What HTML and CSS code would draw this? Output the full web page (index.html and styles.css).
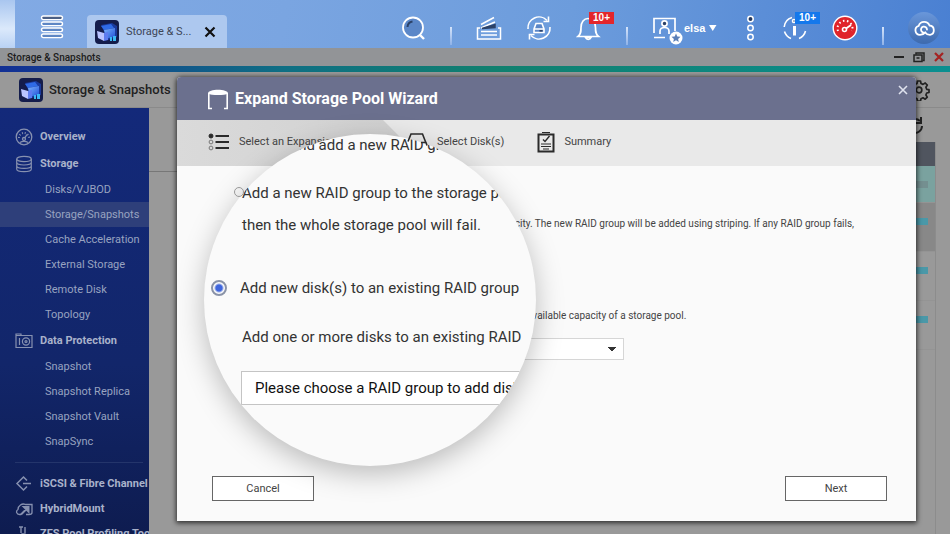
FILE: index.html
```html
<!DOCTYPE html>
<html lang="en">
<head>
<meta charset="utf-8">
<title>Storage &amp; Snapshots</title>
<link rel="stylesheet" href="styles.css">
</head>
<body>
<svg class="defs" aria-hidden="true">
  <defs>
    <linearGradient id="cube" x1="0" y1="0" x2="1" y2="1"><stop offset="0" stop-color="#7db4ff"/><stop offset="1" stop-color="#1d4fd6"/></linearGradient>
    <symbol id="app" viewBox="0 0 26 26">
      <rect x="1" y="1" width="24" height="24" rx="4" fill="#141d4c"/>
      <path d="M7 6l11-2 5 3v11l-9 3z" fill="#1a3a9c"/>
      <path d="M7 7l10-2 3 4-10 2z" fill="#2f6be6"/>
      <path d="M10 11l11-2v8l-9 3z" fill="url(#cube)"/>
      <path d="M3 12l7 2v8l-6-3z" fill="#b9c4ff"/>
      <path d="M10 14l4-1v8l-4 1z" fill="#5d7cf0"/>
      <path d="M16 18h2v4h-2zM19 17h3v5h-3z" fill="#3bb8f5"/>
    </symbol>
  </defs>
</svg>

<header class="topbar">
  <button class="menu" aria-label="Main menu">
    <svg width="24" height="26" viewBox="0 0 24 26" fill="#5d86c4" stroke="#fff" stroke-width="1.4"><rect x="1.5" y="2" width="21" height="3.6" rx="1.8" fill="#4a5f85"/><rect x="1.5" y="8" width="21" height="3.6" rx="1.8"/><rect x="1.5" y="14" width="21" height="3.6" rx="1.8"/><rect x="1.5" y="20" width="21" height="3.6" rx="1.8"/></svg>
  </button>
  <div class="tab">
    <svg width="26" height="26"><use href="#app"/></svg>
    <span>Storage &amp; S...</span>
    <button aria-label="Close tab"><svg width="12" height="12" viewBox="0 0 12 12" stroke="#111" stroke-width="2.2"><path d="M1.5 1.5l9 9M10.5 1.5l-9 9"/></svg></button>
  </div>
  <nav class="tools">
    <button aria-label="Search"><svg width="26" height="26" viewBox="0 0 26 26" fill="none" stroke="#fff" stroke-width="1.8"><circle cx="13" cy="12.5" r="10" fill="#5b87c8"/><path d="M19.500 19.500l4.500 4.500" stroke-width="2.4"/><path d="M7.500 12a6 6 0 0 1 5-5.500" stroke="#2c4268" stroke-width="2"/></svg></button>
    <i class="sep"></i>
    <button aria-label="Background tasks"><svg width="26" height="26" viewBox="0 0 26 26" fill="none" stroke="#fff" stroke-width="1.5"><path d="M4 13H1.500v11h23V13H22M5 16.500h16M5 20h16"/><path d="M5 9.500L18 2.500M5 13l14-6"/><path d="M6 13.500L19 9.500v3z" fill="#2c4268" stroke="#2c4268"/></svg></button>
    <button aria-label="External device"><svg width="26" height="26" viewBox="0 0 26 26" fill="none" stroke="#fff" stroke-width="1.6"><path d="M2 14A11 11 0 0 1 21 5.500M24 12A11 11 0 0 1 5 20.500"/><path d="M22.500 1.500v5h-5M3.500 24.500v-5h5"/><path d="M8 14l2-5.500h6l2 5.500v3.500H8zM8 14h10" fill="#5b87c8"/><path d="M13.500 15.800h3" stroke="#2c4268"/></svg></button>
    <button class="badged" aria-label="Notifications"><svg width="26" height="26" viewBox="0 0 26 26" fill="none" stroke="#fff" stroke-width="1.7"><path d="M2 21.500c3-2.500 3-5 3-9C5 7 8 3.500 12 3.500s7.500 3.500 7.500 9c0 4 0 6.500 3 9z"/><path d="M9.500 22.500a3 3 0 0 0 5.500 0z" fill="#2c4268"/></svg><b class="badge red">10+</b></button>
    <i class="sep"></i>
    <button class="user">
      <svg width="32" height="30" viewBox="0 0 32 30" fill="none" stroke="#fff" stroke-width="1.7"><path d="M2 18V3.500h21V16M2 22.500h11"/><circle cx="12.5" cy="8.5" r="2.6" fill="#2c4268"/><path d="M8 19v-3c0-2 2-3.500 4.500-3.500S17 14 17 16v3"/><circle cx="24" cy="23" r="6.5" fill="#fff" stroke="none"/><path d="M24 18.500l1.300 3 3.200.3-2.400 2.100.7 3.100-2.800-1.700-2.800 1.700.7-3.100-2.400-2.100 3.200-.3z" fill="#5a7fb8" stroke="none"/></svg>
      <span>elsa</span>
      <svg width="8" height="8" viewBox="0 0 8 8" fill="#fff"><path d="M0 1h7.500L3.750 7z"/></svg>
    </button>
    <button aria-label="More"><svg width="14" height="26" viewBox="0 0 14 26" fill="none" stroke="#fff" stroke-width="1.5"><circle cx="6.5" cy="4" r="2.7" fill="#24385e"/><circle cx="6.5" cy="13" r="2.7"/><circle cx="6.5" cy="22" r="2.7"/></svg></button>
    <button class="badged" aria-label="Information"><svg width="26" height="26" viewBox="0 0 26 26" fill="none" stroke="#fff" stroke-width="1.6"><path d="M10 2.500A11 11 0 0 0 2.200 12M2.500 16.500A11 11 0 0 0 9 23.500M17 23.500A11 11 0 0 0 23.500 16"/><path d="M12.500 11v9.500" stroke-width="3"/><circle cx="12" cy="6" r="1.5" fill="#2c4268"/></svg><b class="badge blue">10+</b></button>
    <button aria-label="Dashboard"><svg width="26" height="26" viewBox="0 0 26 26" fill="none" stroke="#fff"><circle cx="13" cy="13" r="11.8" fill="#e0242a" stroke-width="1.4"/><path d="M6 16a7.500 7.500 0 1 1 14 0" stroke-width="2" stroke-dasharray="1.5 2.6"/><circle cx="12.5" cy="14.5" r="2" stroke-width="1.6"/><path d="M14 13.500l5-3.500" stroke-width="2"/></svg></button>
    <i class="sep"></i>
    <button class="cloud" aria-label="Cloud"><svg width="22" height="18" viewBox="0 0 22 18" fill="none" stroke="#fff" stroke-width="1.8" stroke-linecap="round"><path d="M14 10.500a3 3 0 1 0-1 2.300c-1.800 2-3.500 3-6 3a4.600 4.600 0 0 1-1.300-9A5.800 5.800 0 0 1 16.500 6.500a4.700 4.700 0 0 1 .5 9.300c-2.500 0-3.800-.8-5-2.300"/></svg></button>
  </nav>
</header>

<main class="window">
  <div class="titlebar">
    <span>Storage &amp; Snapshots</span>
    <div class="winbtns">
      <button aria-label="Minimize"><svg width="12" height="12" viewBox="0 0 12 12" stroke="#222" stroke-width="2"><path d="M1 6h10"/></svg></button>
      <button aria-label="Restore"><svg width="12" height="12" viewBox="0 0 12 12" fill="none" stroke="#222" stroke-width="1.5"><path d="M3 3.500V2h8v7.500H9.500"/><path d="M1 4h8v6.500H1zM3.500 7h3"/></svg></button>
      <button aria-label="Close window"><svg width="12" height="12" viewBox="0 0 12 12" stroke="#a52222" stroke-width="2.2"><path d="M2 2l8 8M10 2l-8 8"/></svg></button>
    </div>
  </div>
  <div class="stripe"></div>
  <div class="apphead">
    <svg width="26" height="26"><use href="#app"/></svg>
    <h1>Storage &amp; Snapshots</h1>
    <button class="gear" aria-label="Settings"><svg width="22" height="22" viewBox="0 0 22 22" fill="none" stroke="#222" stroke-width="1.7" stroke-linejoin="round"><circle cx="11" cy="11" r="2.8"/><path d="M9.500 2h3l.5 2.500 2 .9 2.200-1.400 2.100 2.100-1.400 2.200.8 2 2.300.4v2.800l-2.300.5-.8 2 1.400 2.100-2.100 2.100-2.200-1.400-2 .9-.5 2.300h-3L9 19.700l-2-.9-2.200 1.400-2.100-2.100L4.100 16l-.8-2L1 13.500v-2.800l2.300-.4.800-2-1.400-2.200L4.800 4 7 5.400l2-.9z"/></svg></button>
  </div>
  <div class="work">
    <nav class="side">
      <a class="sec" href="#"><svg width="18" height="18" viewBox="0 0 18 18" fill="none" stroke="currentColor" stroke-width="1.3"><circle cx="9" cy="9" r="7.8"/><path d="M4 10a5 5 0 0 1 10 0" stroke-dasharray="1 1.8" stroke-width="2"/><circle cx="9" cy="11" r="1.5"/><path d="M9.800 9.800L12 6.500M5 14.500c2-1.500 6-1.500 8 0"/></svg>Overview</a>
      <a class="sec" href="#"><svg width="18" height="18" viewBox="0 0 18 18" fill="none" stroke="currentColor" stroke-width="1.2"><ellipse cx="9" cy="4" rx="7.3" ry="2.7"/><path d="M1.700 4v10c0 1.500 3.300 2.700 7.300 2.700s7.300-1.200 7.300-2.700V4M1.700 7.300C1.700 8.800 5 10 9 10s7.300-1.200 7.300-2.700M1.700 10.700c0 1.500 3.300 2.700 7.300 2.700s7.300-1.200 7.300-2.700"/></svg>Storage</a>
      <ul>
        <li><a href="#">Disks/VJBOD</a></li>
        <li class="on"><a href="#">Storage/Snapshots</a></li>
        <li><a href="#">Cache Acceleration</a></li>
        <li><a href="#">External Storage</a></li>
        <li><a href="#">Remote Disk</a></li>
        <li><a href="#">Topology</a></li>
      </ul>
      <a class="sec" href="#"><svg width="18" height="18" viewBox="0 0 18 18" fill="none" stroke="currentColor" stroke-width="1.2"><path d="M1 3.500h16v12H1zM1 3.500V2h5v1.500M4.500 6v7"/><circle cx="11" cy="9.5" r="3.6"/><circle cx="11" cy="9.5" r="1"/></svg>Data Protection</a>
      <ul>
        <li><a href="#">Snapshot</a></li>
        <li><a href="#">Snapshot Replica</a></li>
        <li><a href="#">Snapshot Vault</a></li>
        <li><a href="#">SnapSync</a></li>
      </ul>
      <hr>
      <a class="sec low" href="#"><svg width="18" height="18" viewBox="0 0 18 18" fill="none" stroke="currentColor" stroke-width="1.5"><path d="M12 5.500L8.500 2 2 8.500 8.500 15 12 11.500M8 8.500h8"/></svg>iSCSI &amp; Fibre Channel</a>
      <a class="sec low" href="#"><svg width="18" height="18" viewBox="0 0 18 18" fill="none" stroke="currentColor" stroke-width="1.3"><path d="M6 14.500H4.500c-3 0-4-3.500-1.500-5 0-4 4-6.500 7.500-5h6.500v8c0 1.500-1.500 2-3 2H11"/><path d="M6 14.500l7-7M9 7h4.500v4.500z" fill="currentColor" stroke-width="2"/></svg>HybridMount</a>
      <a class="sec low" href="#"><svg width="18" height="18" viewBox="0 0 18 18" fill="none" stroke="currentColor" stroke-width="1.4"><path d="M4 2h4M6 2v6M10 2v6M2 16v-4h3v4M7 16V9h3v7M12 16v-5h3v5"/></svg>ZFS Pool Profiling Tool</a>
    </nav>
    <section class="content" aria-hidden="true">
      <div class="toolline"><svg width="18" height="20" viewBox="0 0 18 20" fill="none" stroke="#222" stroke-width="2"><path d="M15 2v6H9.500M16 11a7 7 0 1 1-2-5"/></svg></div>
      <div class="panes">
        <div class="pane"></div>
        <div class="grid">
          <div class="ghead"></div>
          <div class="grow sel"><i></i></div>
          <div class="grow dark"><i></i></div>
          <div class="grow"><i></i></div>
          <div class="grow"><i></i></div>
        </div>
      </div>
    </section>
  </div>

  <div class="dialog" role="dialog" aria-labelledby="dlg-title">
    <div class="dhead">
      <svg width="22" height="22" viewBox="0 0 22 22" fill="none" stroke="#fff" stroke-width="1.6"><path d="M1.800 5v15.500H5M20.200 5v15.500H17"/><path d="M1 5.500C1 .5 21 .5 21 5.500 18 7.500 4 7.500 1 5.500z" fill="#fff" stroke="none"/></svg>
      <h2 id="dlg-title">Expand Storage Pool Wizard</h2>
      <button class="x" aria-label="Close"><svg width="10" height="10" viewBox="0 0 10 10" stroke="#dfe2ee" stroke-width="1.6"><path d="M1 1l8 8M9 1L1 9"/></svg></button>
    </div>
    <ol class="steps">
      <li class="current"><svg width="22" height="18" viewBox="0 0 22 18" fill="none" stroke="#2a2a2a"><path d="M7.500 3H21M7.500 9H21M7.500 15H21" stroke-width="1.9"/><circle cx="3" cy="3" r="2" fill="#2a2a2a"/><circle cx="3" cy="9" r="1.9" stroke="#777"/><circle cx="3" cy="15" r="1.9" stroke="#777"/></svg>Select an Expansion</li>
      <li><svg class="disk" width="22" height="20" viewBox="0 0 22 20" fill="none" stroke="#2a2a2a" stroke-width="1.6"><path d="M2 9.500L5 2h11.500l3.500 9M15 10.500h5l1 3"/></svg>Select Disk(s)</li>
      <li><svg width="18" height="22" viewBox="0 0 18 22" fill="none" stroke="#2a2a2a"><path d="M1.500 3.500h15v17h-15z" stroke-width="2"/><path d="M5 1.500h8M4 13h10M4 15.500h10M6 18h6" stroke-width="1.2"/><path d="M6 8.500l2 2L12.500 5" stroke-width="1.4"/></svg>Summary</li>
    </ol>
    <div class="dbody">
      <input class="opt" type="radio" name="mode" aria-label="New RAID group">
      <p class="note first">capacity. The new RAID group will be added using striping. If any RAID group fails,</p>
      <p class="note second">available capacity of a storage pool.</p>
      <select class="pick" aria-label="RAID group"><option></option></select>
    </div>
    <div class="dfoot">
      <button>Cancel</button>
      <button>Next</button>
    </div>

    <div class="lens">
      <p class="title">and add a new RAID group</p>
      <p class="para">Add a new RAID group to the storage pool<br>then the whole storage pool will fail.</p>
      <div class="choice"><input type="radio" name="mode" id="existing" checked><label for="existing">Add new disk(s) to an existing RAID group</label></div>
      <p class="more">Add one or more disks to an existing RAID</p>
      <select aria-label="RAID group to add disks to"><option>Please choose a RAID group to add disks</option></select>
    </div>
  </div>
</main>
</body>
</html>
```
FILE: styles.css
```css
* { box-sizing: border-box; }
body {
  margin: 0;
  height: 100vh;
  overflow: hidden;
  display: flex;
  flex-direction: column;
  font-family: Roboto, "Liberation Sans", sans-serif;
  font-size: 11px;
  color: #333;
}
.defs { position: absolute; width: 0; height: 0; }
h1, h2, p, ul, ol { margin: 0; padding: 0; }
ul, ol { list-style: none; }
button { border: 0; padding: 0; background: none; font: inherit; color: inherit; }
svg { display: block; flex: none; }
a { color: inherit; text-decoration: none; }

.topbar {
  height: 48px;
  flex: none;
  display: flex;
  align-items: center;
  padding: 0 10px 0 40px;
  background:
    linear-gradient(#a9c6ef, #dbe9fb 60%, #b9d2f4) left / 15px 100% no-repeat,
    linear-gradient(100deg, #82aae4 0%, #7aa5e1 30%, #6c9cdc 60%, #4a80d2 100%);
}
.menu { margin-top: 6px; }
.tab {
  align-self: flex-end;
  width: 140px;
  height: 33px;
  margin-left: 23px;
  padding: 0 11px 0 7px;
  display: flex;
  align-items: center;
  gap: 6px;
  border-radius: 4px 4px 0 0;
  background: #adc8ef;
  color: #3d4657;
}
.tab button { margin-left: auto; }
.tools { margin: 7px 0 0 auto; display: flex; align-items: center; gap: 24px; }
.sep { align-self: flex-end; width: 2px; height: 18px; background: linear-gradient(#d5e4fa, #8fb2e8); }
.badged { position: relative; }
.badge {
  position: absolute;
  left: 13px;
  top: -3px;
  width: 25px;
  line-height: 12px;
  font-family: "Liberation Sans", sans-serif;
  font-size: 10px;
  text-align: center;
  color: #fff;
}
.red { background: #e3262b; }
.blue { background: #1478ec; }
.user { width: 68px; display: flex; align-items: center; color: #fff; font: bold 11px "Liberation Sans", sans-serif; }
.user span { margin-right: 4px; }
.user svg:first-child { margin-top: 4px; }
.cloud {
  width: 32px;
  height: 32px;
  display: flex;
  align-items: center;
  justify-content: center;
  border-radius: 50%;
  background: linear-gradient(#6a97da, #3d6aae);
}

.window { position: relative; flex: 1; min-height: 0; display: flex; flex-direction: column; background: #999; }
.titlebar {
  height: 18px;
  flex: none;
  display: flex;
  align-items: center;
  justify-content: space-between;
  padding: 0 5px 0 7px;
  background: #929497;
  color: #1c1c1c;
  font-size: 10px;
  font-weight: 500;
}
.winbtns { display: flex; gap: 8px; }
.stripe { height: 6px; flex: none; background: linear-gradient(90deg, #122f94, #0f6f84 30%, #10806f 52%, #0a8f90); }
.apphead {
  height: 36px;
  flex: none;
  display: flex;
  align-items: center;
  gap: 5px;
  padding: 0 20px 0 18px;
  border-bottom: 1px solid #8a8a8a;
}
.apphead h1 { font-size: 13px; font-weight: 500; color: #1f1f1f; }
.gear { margin-left: auto; }
.work { flex: 1; min-height: 0; display: flex; }
.side {
  width: 149px;
  flex: none;
  overflow: hidden;
  padding-top: 15px;
  background: linear-gradient(#13297a, #12266a 60%, #0e1c50);
  color: #98a3c0;
}
.sec { display: flex; align-items: center; gap: 7px; height: 27px; padding-left: 15px; font-weight: 700; white-space: nowrap; color: #a9b2ca; }
.sec svg { color: #8791b0; }
.low { height: 25px; }
.side li { height: 25px; line-height: 25px; padding-left: 45px; white-space: nowrap; }
.side li.on { background: #2e3f7a; }
.side hr { margin: 8px 6px 8px 15px; border: 0; border-top: 1px solid #24356b; }
.content { flex: 1; display: flex; flex-direction: column; }
.toolline { height: 34px; display: flex; justify-content: flex-end; align-items: center; padding-right: 26px; }
.panes { flex: 1; display: flex; justify-content: space-between; padding-right: 14px; }
.pane { width: 40px; height: 30px; border-bottom: 1px solid #777; }
.grid { width: 80px; border-right: 1px solid #8c8c8c; }
.ghead { height: 24px; background: #50555f; }
.grow { height: 49px; display: flex; justify-content: flex-end; padding: 15px 7px 0 0; border-bottom: 1px solid #949494; }
.grow i { width: 40px; height: 7px; background: #4a98a8; }
.grow.sel { height: 37px; background: #7aa29f; }
.grow.sel i { background: #748f90; }
.grow.dark { background: #888; }

.dialog {
  position: absolute;
  top: 29px;
  left: 177px;
  right: 34px;
  bottom: 13px;
  display: flex;
  flex-direction: column;
  background: #fafafa;
  border-radius: 4px 4px 0 0;
  box-shadow: 0 1px 5px 1px rgba(0, 0, 0, .7);
}
.dhead {
  height: 43px;
  flex: none;
  display: flex;
  align-items: center;
  gap: 6px;
  padding: 0 8px 0 30px;
  background: #6b708e;
  border-radius: 4px 4px 0 0;
  color: #fff;
}
.dhead h2 { font-size: 16px; font-weight: 700; }
.x { align-self: flex-start; margin: 8px 0 0 auto; }
.steps { height: 46px; flex: none; display: flex; background: #e9e9e9; color: #444; }
.steps li { display: flex; align-items: center; gap: 9px; padding-bottom: 3px; }
.steps .current {
  width: 229px;
  padding-left: 31px;
  background: linear-gradient(90deg, #dadada, #d0d0d0);
  clip-path: polygon(0 0, 206px 0, 100% 50%, 206px 100%, 0 100%);
}
.steps li + li { margin-right: 33px; }
.disk { position: relative; z-index: 3; }
.dbody { flex: 1; }
.opt { position: relative; z-index: 3; }
input[type="radio"] { appearance: none; border-radius: 50%; flex: none; }
.opt { display: block; width: 10px; height: 10px; margin: 21px 0 0 57px; border: 1px solid #999; }
.note { line-height: 16px; font-size: 10px; color: #444; }
.first { margin: 19px 0 0 316px; }
.second { margin: 76px 0 0 350px; }
.pick { display: block; width: 374px; height: 22px; margin: 14px 0 0 73px; }
select {
  appearance: none;
  border: 1px solid #c4c4c4;
  border-radius: 0;
  background: #fff;
  font: inherit;
}
.pick {
  border-color: #d6d6d6;
  background:
    linear-gradient(to top right, transparent 50%, #333 50%) right 11px center / 4px 4px no-repeat,
    linear-gradient(to top left, transparent 50%, #333 50%) right 7px center / 4px 4px no-repeat,
    #fff;
}
.dfoot { display: flex; justify-content: space-between; padding: 0 29px 20px 35px; }
.dfoot button { width: 102px; height: 25px; border: 1px solid #666; background: #fff; color: #444; }

.lens {
  position: absolute;
  z-index: 2;
  top: 57px;
  left: 27px;
  width: 332px;
  height: 332px;
  overflow: hidden;
  padding-top: 1px;
  border-radius: 50%;
  background: #fafafa;
  box-shadow: 0 8px 28px rgba(0, 0, 0, .25);
  font-size: 15px;
  line-height: 20px;
  white-space: nowrap;
  color: #333;
}
.lens p { padding-left: 38px; }
.lens .title { padding-left: 86px; }
.lens .para { margin-top: 22px; line-height: 32px; }
.choice { display: flex; align-items: center; gap: 13px; margin-top: 37px; padding-left: 7px; }
.choice input { width: 16px; height: 16px; margin: 0; border: 2px solid #8a93a8; background: radial-gradient(circle, #3f66dd 3px, #fafafa 5px); }
.lens .more { margin-top: 29px; }
.lens select { width: 340px; height: 34px; margin: 24px 0 0 37px; padding: 0 13px; color: #111; }
```
